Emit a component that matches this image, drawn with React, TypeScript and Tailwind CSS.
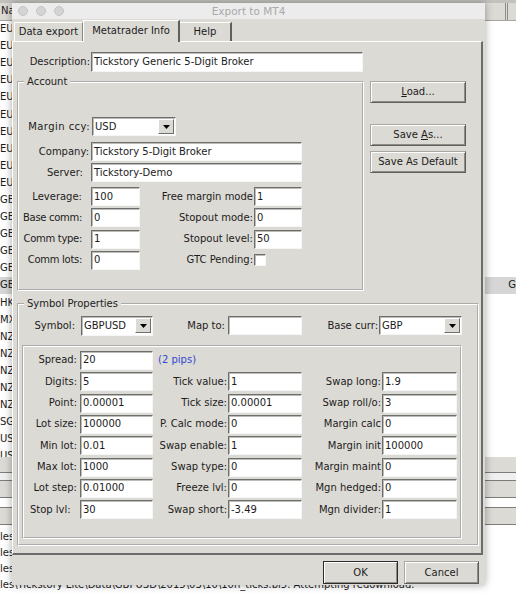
import React from 'react';

const sunken =
  'bg-white border border-t-[#6e6e6e] border-l-[#6e6e6e] border-r-[#f6f6f6] border-b-[#f6f6f6] shadow-[inset_1px_1px_0_#bdbbb6]';

// Swing-like lowered etched border (dark line, then white line)
const etched = 'border-2 border-white [border-style:groove]';

const Field = ({ value = '', className = '' }: { value?: string; className?: string }) => (
  <div className={`h-[19px] shrink-0 flex items-center pl-[2px] overflow-hidden whitespace-nowrap ${sunken} ${className}`}>
    {value}
  </div>
);

const Combo = ({ value, className = '' }: { value: string; className?: string }) => (
  <div className={`h-[19px] shrink-0 flex items-center ${sunken} ${className}`}>
    <span className="flex-1 pl-[2px]">{value}</span>
    <span className="w-[16px] h-[15px] mr-[1px] flex items-center justify-center bg-[#dcdad5] border border-t-white border-l-white border-r-[#6e6e6e] border-b-[#6e6e6e]">
      <svg width="7" height="4" viewBox="0 0 7 4">
        <path d="M0 0h7L3.5 4z" fill="#000" />
      </svg>
    </span>
  </div>
);

const Btn = ({ children, className = '', isDefault = false }: { children: React.ReactNode; className?: string; isDefault?: boolean }) => (
  <div
    className={`flex items-center justify-center bg-[#dcdad5] border shadow-[inset_1px_1px_0_#ffffff,inset_-1px_-1px_0_#8e8c87] ${
      isDefault ? 'border-[#2b2b2b]' : 'border-t-[#a9a7a2] border-l-[#a9a7a2] border-r-[#5f5f5f] border-b-[#5f5f5f]'
    } ${className}`}
  >
    {children}
  </div>
);

const Lbl = ({ children, className = '' }: { children: React.ReactNode; className?: string }) => (
  <span className={`shrink-0 text-right whitespace-nowrap overflow-hidden ${className}`}>{children}</span>
);

const accountRows = [
  { l: 'Leverage:', t: '', v: '100', l2: 'Free margin mode', v2: '1' },
  { l: 'Base comm:', t: 'tracking-[-0.3px]', v: '0', l2: 'Stopout mode:', v2: '0' },
  { l: 'Comm type:', t: 'tracking-[-0.3px]', v: '1', l2: 'Stopout level:', v2: '50' },
  { l: 'Comm lots:', t: 'tracking-[-0.3px]', v: '0', l2: 'GTC Pending:', v2: null },
];

const symRows: Array<[string, string, string | null, string | null, string | null, string | null]> = [
  ['Spread:', '20', null, null, null, null],
  ['Digits:', '5', 'Tick value:', '1', 'Swap long:', '1.9'],
  ['Point:', '0.00001', 'Tick size:', '0.00001', 'Swap roll/o:', '3'],
  ['Lot size:', '100000', 'P. Calc mode:', '0', 'Margin calc', '0'],
  ['Min lot:', '0.01', 'Swap enable:', '1', 'Margin init', '100000'],
  ['Max lot:', '1000', 'Swap type:', '0', 'Margin maint', '0'],
  ['Lot step:', '0.01000', 'Freeze lvl:', '0', 'Mgn hedged:', '0'],
  ['Stop lvl:  ', '30', 'Swap short:', '-3.49', 'Mgn divider:', '1'],
];

const tableRows = [
  ...Array(10).fill('EURUSD'),
  ...Array(6).fill('GBPUSD'),
  'HKDJPY', 'MXNJPY', 'NZDCAD', 'NZDCHF', 'NZDJPY', 'NZDUSD', 'NZDSGD', 'SGDJPY', 'USDCAD', 'USDCHF', 'USDJPY',
];

const logLines = ['07h', '08h', '09h', '10h'].map(
  (h) => `les\\Tickstory Lite\\Data\\GBPUSD\\2015\\03\\10\\${h}_ticks.bi5. Attempting redownload.`
);

export default function App() {
  return (
    <div className="relative w-[516px] h-[594px] overflow-hidden bg-white text-[10px] leading-[12px] text-[#1c1c1c] font-['DejaVu_Sans',sans-serif]">
      {/* Background application */}
      <div className="flex flex-col">
        <div className="h-[20.5px] flex bg-[#dcdad5] border-t-[3px] border-t-[#c3c1bc] border-b border-b-[#a6a49f]">
          <div className="w-[506px] pl-[1px] flex items-center border-r border-[#8f8d88]">Name</div>
          <div className="w-[2px] border-r border-[#8f8d88]" />
        </div>
        <div className="h-[436.5px] overflow-hidden">
          {tableRows.map((r, i) => (
            <div key={i} className={`h-[17.1px] flex items-center ${i === 15 ? 'bg-[#d6d6d6]' : ''}`}>
              <span className="w-[510px]">{r}</span>
              {i === 15 && <span>G</span>}
            </div>
          ))}
        </div>
        <div className="h-[16px] bg-[#dcdad5] border-b border-[#7e7c78]" />
        <div className="h-[7px] bg-[#efefef]" />
        <div className="h-[18px] bg-[#dcdad5] border-y border-[#7e7c78]" />
        <div className="h-[9px]" />
        <div className="h-[18px] bg-[#dcdad5] border-y border-[#7e7c78]" />
        <div className="h-[4px]" />
        {logLines.map((t, i) => (
          <div key={i} className="leading-[16px] whitespace-nowrap">
            {t}
          </div>
        ))}
      </div>

      {/* Export to MT4 dialog */}
      <div className="absolute left-[12px] top-[3px] w-[473px] h-[582px] flex flex-col bg-[#dcdad5] shadow-[0_0_8px_rgba(0,0,0,0.35)]">
        {/* Title bar */}
        <div className="h-[16px] grid grid-cols-[1fr_auto_1fr] items-center bg-[#ececec]">
          <div className="flex gap-[8px] pl-[6px]">
            <span className="w-[10px] h-[10px] rounded-full bg-[#d4d4d4] border border-[#c4c4c4]" />
            <span className="w-[10px] h-[10px] rounded-full bg-[#d4d4d4] border border-[#c4c4c4]" />
            <span className="w-[10px] h-[10px] rounded-full bg-[#d4d4d4] border border-[#c4c4c4]" />
          </div>
          <div className="text-[10.5px] text-[#a9a9a9]">Export to MT4</div>
          <div />
        </div>

        {/* Tabs */}
        <div className="mt-[1px] h-[21px] flex items-end pl-[2px]">
          <div className="w-[69px] h-[19px] flex items-center justify-center border-t border-l border-white border-r border-r-[#8a8883]">
            Data export
          </div>
          <div className="relative z-10 -mb-[1px] w-[97px] h-[22px] pb-[1px] flex items-center justify-center bg-[#dcdad5] border-t border-l border-white border-r-2 border-r-[#5f5f5f]">
            Metatrader Info
          </div>
          <div className="w-[52px] h-[19px] flex items-center justify-center border-t border-white border-r-2 border-r-[#5f5f5f]">
            Help
          </div>
        </div>

        {/* Tab panel */}
        <div className="w-[471px] h-[514px] flex flex-col border-t border-l border-white border-r-2 border-b-2 border-r-[#6b6b6b] border-b-[#6b6b6b]">
          <div className="flex">
            <div className="w-[351px] flex flex-col">
              <div className="mt-[10px] h-[20px] flex items-center">
                <Lbl className="w-[77px]">Description:</Lbl>
                <Field value="Tickstory Generic 5-Digit Broker" className="ml-[1px] w-[272px] h-[20px]" />
              </div>

              <fieldset className={`mt-[4px] ml-[4px] w-[347px] pb-[19px] ${etched}`}>
                <legend className="ml-[5px] px-[3px] leading-[12px]">Account</legend>
                <div className="mt-[29px] flex items-center">
                  <Lbl className="w-[71px] tracking-[0.45px]">Margin ccy:</Lbl>
                  <Combo value="USD" className="ml-[2px] w-[84px]" />
                </div>
                <div className="mt-[6px] flex items-center">
                  <Lbl className="w-[70px]">Company:</Lbl>
                  <Field value="Tickstory 5-Digit Broker" className="ml-[2px] w-[211px]" />
                </div>
                <div className="mt-[2px] flex items-center">
                  <Lbl className="w-[64px]">Server:</Lbl>
                  <Field value="Tickstory-Demo" className="ml-[8px] w-[211px]" />
                </div>
                <div className="mt-[5px] grid auto-rows-[19px] gap-y-[2.33px]">
                  {accountRows.map((r) => (
                    <div key={r.l} className="flex items-center">
                      <Lbl className={`w-[63px] ${r.t}`}>{r.l}</Lbl>
                      <Field value={r.v} className="ml-[9px] w-[49px]" />
                      <Lbl className="w-[113px]">{r.l2}</Lbl>
                      {r.v2 !== null ? (
                        <Field value={r.v2} className="ml-[1px] w-[48px]" />
                      ) : (
                        <span className={`ml-[1px] w-[12px] h-[12px] ${sunken}`} />
                      )}
                    </div>
                  ))}
                </div>
              </fieldset>
            </div>

            <div className="ml-[6px] w-[96px] flex flex-col">
              <Btn className="mt-[39px] h-[22px]">
                <span>
                  <span className="underline">L</span>oad...
                </span>
              </Btn>
              <Btn className="mt-[21px] h-[22px]">
                <span>
                  Save <span className="underline">A</span>s...
                </span>
              </Btn>
              <Btn className="mt-[5px] h-[22px]">Save As Default</Btn>
            </div>
          </div>

          <fieldset className={`mt-[7px] ml-[4px] w-[462px] pb-[5px] ${etched}`}>
            <legend className="ml-[5px] px-[3px] leading-[12px]">Symbol Properties</legend>
            <div className="mt-[6px] h-[20px] flex items-center">
              <Lbl className="w-[56px]">Symbol:</Lbl>
              <Combo value="GBPUSD" className="ml-[6px] w-[72px] h-[20px]" />
              <Lbl className="w-[72px]">Map to:</Lbl>
              <Field className="ml-[3px] w-[74px]" />
              <Lbl className="w-[76px]">Base curr:</Lbl>
              <Combo value="GBP" className="ml-[1px] w-[83px]" />
            </div>

            <div className={`mt-[9px] ml-[3px] w-[440px] h-[194px] pt-[4px] ${etched}`}>
              <div className="grid grid-cols-[56px_73px_75px_74px_80px_75px] auto-rows-[19px] gap-y-[2.33px] items-center">
                {symRows.map(([l1, v1, l2, v2, l3, v3], i) => (
                  <React.Fragment key={i}>
                    <Lbl className="pr-[3px] whitespace-pre">{l1}</Lbl>
                    <Field value={v1} />
                    {l2 === null ? (
                      <span className="pl-[5px] text-[#3346d1]">(2 pips)</span>
                    ) : (
                      <Lbl className="pr-[1px]">{l2}</Lbl>
                    )}
                    {v2 === null ? <span /> : <Field value={v2} />}
                    {l3 === null ? <span /> : <Lbl className="pr-[1px]">{l3}</Lbl>}
                    {v3 === null ? <span /> : <Field value={v3} />}
                  </React.Fragment>
                ))}
              </div>
            </div>
          </fieldset>
        </div>

        {/* Dialog buttons */}
        <div className="mt-[6px] flex justify-end gap-[6px] pr-[6px]">
          <Btn isDefault className="w-[75px] h-[23px]">OK</Btn>
          <Btn className="w-[75px] h-[23px]">Cancel</Btn>
        </div>
      </div>
    </div>
  );
}
